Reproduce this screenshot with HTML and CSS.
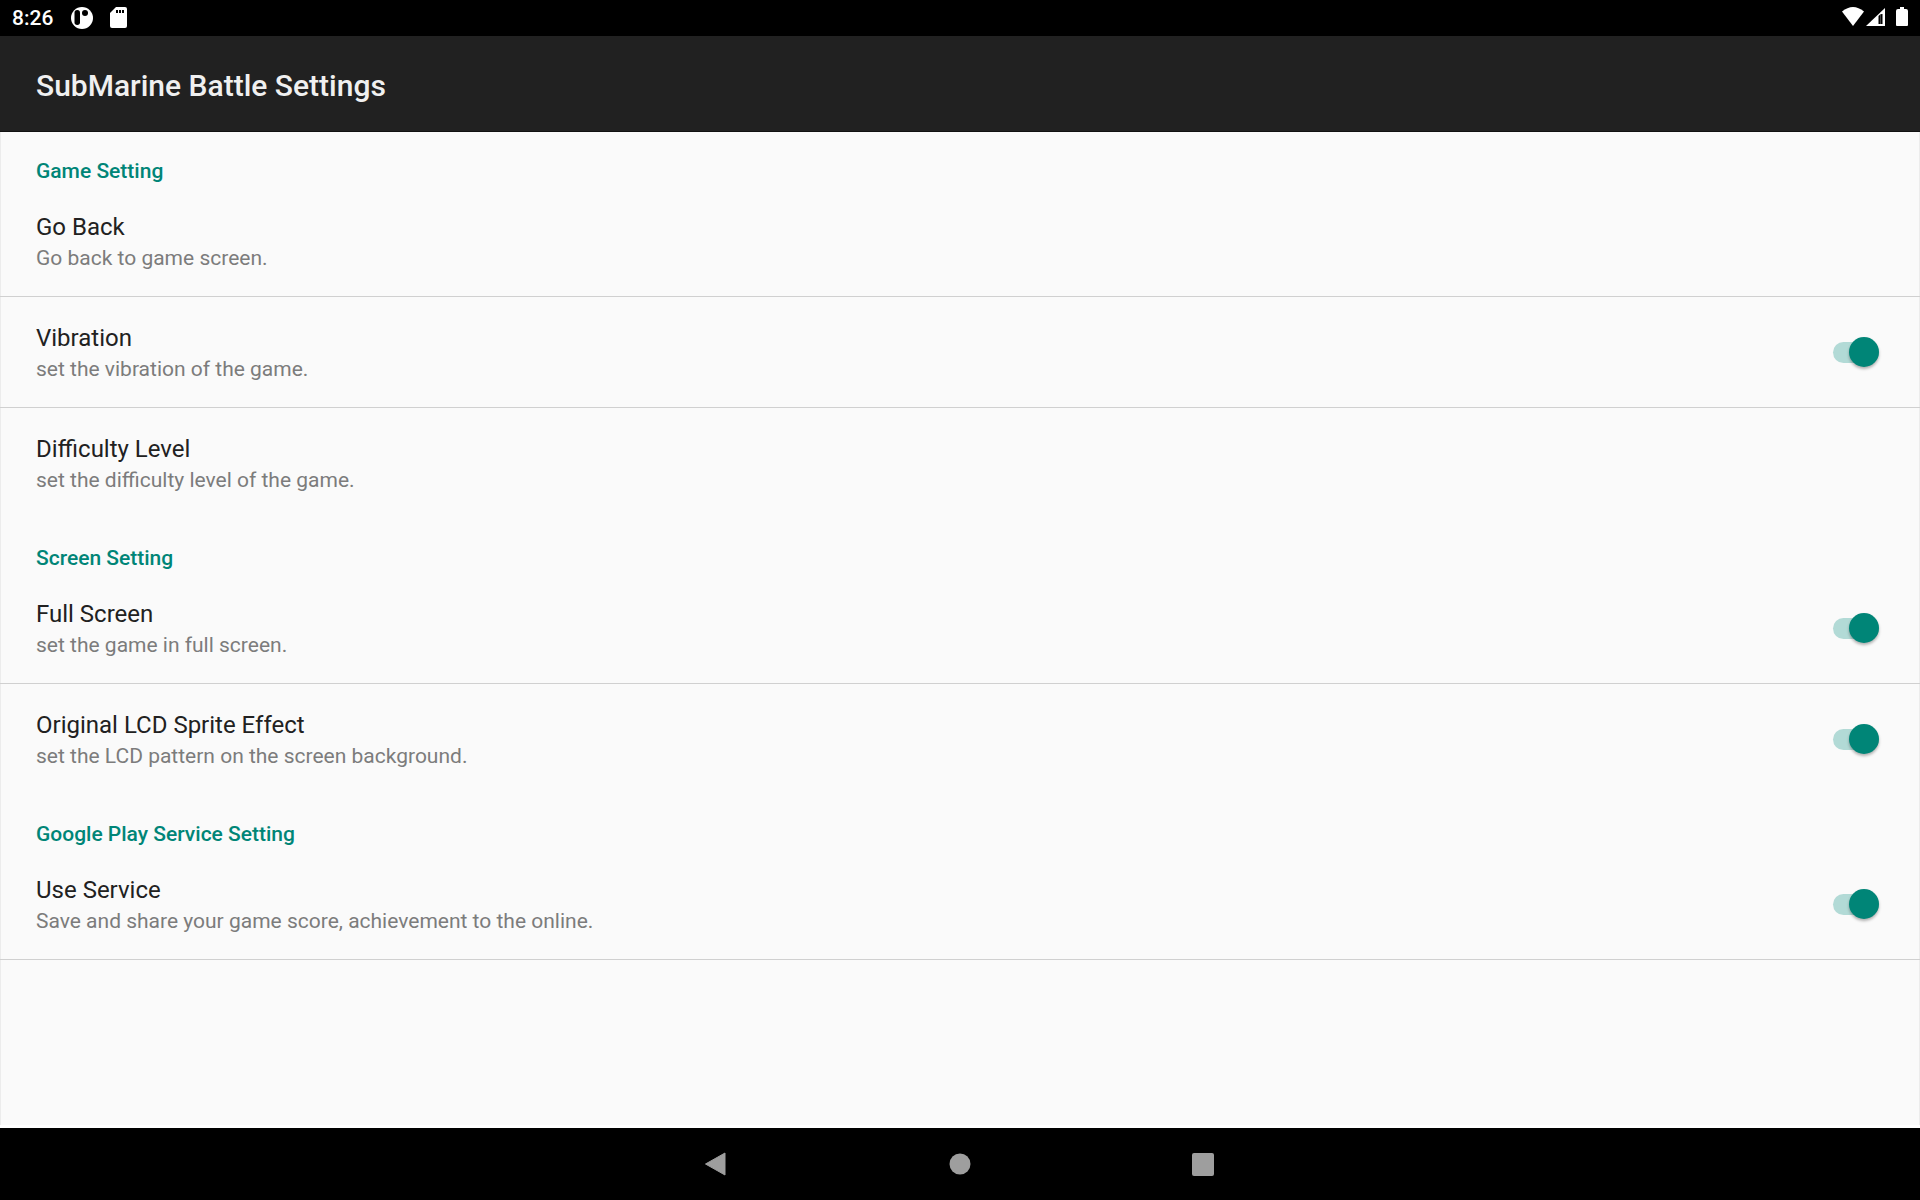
FILE: index.html
```
<!DOCTYPE html>
<html lang="en">
<head>
    <meta charset="UTF-8">
    <meta name="viewport" content="width=device-width, initial-scale=1.0">
    <title>SubMarine Battle Settings</title>
    <link rel="stylesheet" href="styles.css">
</head>
<body>

<div class="status-bar">
    <span class="clock">8:26</span>
    <svg class="app-icon" width="24" height="24" viewBox="0 0 24 24">
        <circle cx="12" cy="12" r="11" fill="#fff"/>
        <rect x="4.500" y="4" width="5.500" height="15" rx="2.700" fill="#000"/>
        <circle cx="15" cy="7" r="3" fill="#000"/>
    </svg>
    <svg class="sd-icon" width="18" height="22" viewBox="0 0 18 22">
        <path d="M6 0h9q2 0 2 2v17q0 2-2 2H2q-2 0-2-2V6z" fill="#fff"/>
        <path d="M6 3h2v3H6zM9 3h2v3H9zM12 3h2v3h-2z" fill="#000"/>
    </svg>
    <div class="status-right">
        <svg width="22" height="20" viewBox="0 0 22 20">
            <path d="M0 4.500Q11-4.500 22 4.500L11 19z" fill="#fff"/>
        </svg>
        <svg width="20" height="20" viewBox="0 0 20 20">
            <path d="M0 19L19 1v18z" fill="#fff"/>
            <path d="M12.500 9q2-2.500 4-2V17h-4z" fill="#000"/>
            <path d="M14 8h1v9h-1z" fill="#444"/>
        </svg>
        <svg class="battery" width="12" height="20" viewBox="0 0 12 20">
            <path d="M4 0h4v2h2q2 0 2 2v14q0 1-1 1H1q-1 0-1-1V4q0-2 2-2h2z" fill="#fff"/>
        </svg>
    </div>
</div>

<header class="app-bar">
    <h1>SubMarine Battle Settings</h1>
</header>

<main class="settings">
    <section>
        <h2>Game Setting</h2>
        <a class="row" href="#game">
            <span class="text">
                <span class="title">Go Back</span>
                <span class="summary">Go back to game screen.</span>
            </span>
        </a>
        <label class="row">
            <span class="text">
                <span class="title">Vibration</span>
                <span class="summary">set the vibration of the game.</span>
            </span>
            <input class="switch" type="checkbox" checked>
        </label>
        <button class="row last" type="button">
            <span class="text">
                <span class="title">Difficulty Level</span>
                <span class="summary">set the difficulty level of the game.</span>
            </span>
        </button>
    </section>

    <section>
        <h2>Screen Setting</h2>
        <label class="row">
            <span class="text">
                <span class="title">Full Screen</span>
                <span class="summary">set the game in full screen.</span>
            </span>
            <input class="switch" type="checkbox" checked>
        </label>
        <label class="row last">
            <span class="text">
                <span class="title">Original LCD Sprite Effect</span>
                <span class="summary">set the LCD pattern on the screen background.</span>
            </span>
            <input class="switch" type="checkbox" checked>
        </label>
    </section>

    <section>
        <h2>Google Play Service Setting</h2>
        <label class="row">
            <span class="text">
                <span class="title">Use Service</span>
                <span class="summary">Save and share your game score, achievement to the online.</span>
            </span>
            <input class="switch" type="checkbox" checked>
        </label>
    </section>
</main>

<nav class="nav-bar">
    <button type="button" aria-label="Back">
        <svg width="24" height="24" viewBox="0 0 24 24">
            <path d="M.5 12L20 1v22z" fill="#9e9e9e" stroke="#9e9e9e" stroke-linejoin="round"/>
        </svg>
    </button>
    <button type="button" aria-label="Home">
        <svg width="24" height="24" viewBox="0 0 24 24">
            <circle cx="12" cy="12" r="10.500" fill="#9e9e9e"/>
        </svg>
    </button>
    <button type="button" aria-label="Overview">
        <svg width="24" height="24" viewBox="0 0 24 24">
            <rect x="1" y="1" width="22" height="23" rx="2" fill="#9e9e9e"/>
        </svg>
    </button>
</nav>

</body>
</html>
```
FILE: styles.css
```
* {
    box-sizing: border-box;
}
body {
    margin: 0;
    min-height: 100vh;
    display: flex;
    flex-direction: column;
    font-family: Roboto, sans-serif;
    background: #fafafa;
}
.status-bar {
    height: 36px;
    padding: 0 12px;
    display: flex;
    align-items: center;
    background: #000;
    color: #fff;
}
.clock {
    font-size: 21px;
    font-weight: 500;
}
.app-icon {
    margin-left: 17px;
}
.sd-icon {
    margin-left: 16px;
}
.status-right {
    margin-left: auto;
    padding-bottom: 2px;
    display: flex;
    align-items: center;
    gap: 2px;
}
.battery {
    margin-left: 8px;
}
.app-bar {
    height: 96px;
    padding: 4px 36px 0;
    display: flex;
    align-items: center;
    background: #212121;
    border-bottom: 1px solid #111;
}
.app-bar h1 {
    margin: 0;
    font-size: 30px;
    font-weight: 500;
    line-height: 36px;
    color: #f0f0f0;
}
.settings {
    flex: 1;
    border-bottom: 3px solid #fff;
    box-shadow: inset 1px 0 #ececec, inset -1px 0 #ececec;
}
h2 {
    margin: 0;
    padding: 25px 36px 0;
    height: 54px;
    font-size: 21px;
    font-weight: 500;
    line-height: 28px;
    color: #008577;
}
.row {
    width: 100%;
    min-height: 111px;
    padding: 0 41px 0 36px;
    display: flex;
    align-items: center;
    justify-content: space-between;
    background: none;
    border: none;
    border-bottom: 1px solid #d0d0d0;
    font-family: inherit;
    text-align: left;
    text-decoration: none;
    cursor: pointer;
}
.row.last {
    border-bottom-color: transparent;
}
.text {
    padding-top: 2px;
}
.title {
    display: block;
    font-size: 24px;
    line-height: 32px;
    color: #212121;
}
.summary {
    display: block;
    font-size: 21px;
    line-height: 30px;
    color: #7c7c7c;
}
.switch {
    appearance: none;
    margin: 0;
    width: 46px;
    height: 21px;
    display: flex;
    align-items: center;
    border-radius: 11px;
    background: #b2dad6;
    cursor: pointer;
}
.switch::before {
    content: "";
    flex: none;
    width: 30px;
    height: 30px;
    border-radius: 50%;
    background: #fafafa;
    box-shadow: 0 2px 3px rgba(0, 0, 0, 0.3);
}
.switch:checked::before {
    margin-left: auto;
    background: #008577;
}
.nav-bar {
    height: 72px;
    display: flex;
    align-items: center;
    justify-content: center;
    gap: 171px;
    background: #000;
}
.nav-bar button {
    width: 72px;
    height: 72px;
    padding: 0;
    display: flex;
    align-items: center;
    justify-content: center;
    background: none;
    border: none;
    cursor: pointer;
}
```
